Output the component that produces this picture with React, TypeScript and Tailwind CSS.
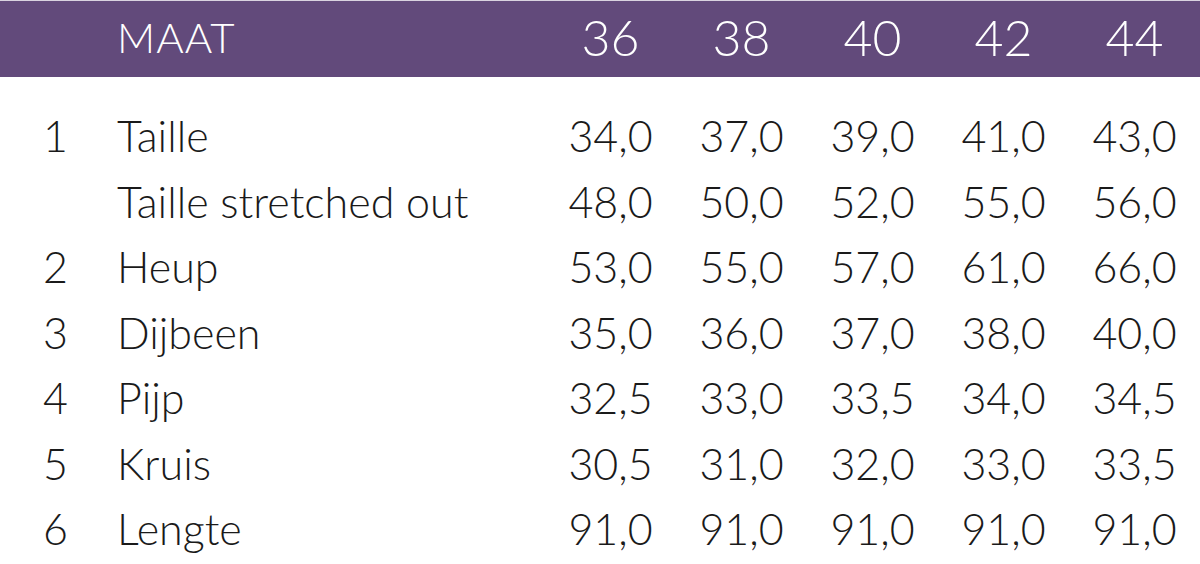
import React from "react";

const sizes = ["36", "38", "40", "42", "44"];
const rows: [string, string, string[]][] = [
  ["1", "Taille", ["34,0", "37,0", "39,0", "41,0", "43,0"]],
  ["", "Taille stretched out", ["48,0", "50,0", "52,0", "55,0", "56,0"]],
  ["2", "Heup", ["53,0", "55,0", "57,0", "61,0", "66,0"]],
  ["3", "Dijbeen", ["35,0", "36,0", "37,0", "38,0", "40,0"]],
  ["4", "Pijp", ["32,5", "33,0", "33,5", "34,0", "34,5"]],
  ["5", "Kruis", ["30,5", "31,0", "32,0", "33,0", "33,5"]],
  ["6", "Lengte", ["91,0", "91,0", "91,0", "91,0", "91,0"]],
];

export default function App() {
  return (
    <div
      className="w-[1200px] h-[564px] bg-white overflow-hidden"
      style={{ fontFamily: "Lato, 'Noto Sans', sans-serif" }}
    >
      <div className="h-px bg-[#d9d3e0]" />
      <div className="grid grid-cols-[117px_1fr_repeat(5,131px)] items-center h-[76px] pb-[5px] bg-[#624a7b] text-white font-light">
        <div />
        <div className="text-[42px] leading-none tracking-[1px]">MAAT</div>
        {sizes.map((s) => (
          <div key={s} className="text-center text-[50px] leading-none">
            {s}
          </div>
        ))}
      </div>
      <div className="pt-[26px] text-[#1a1a1a] font-light">
        {rows.map(([n, label, vals], i) => (
          <div
            key={i}
            className="grid grid-cols-[117px_1fr_repeat(5,131px)] items-center h-[65.5px] text-[43px] leading-none"
          >
            <div className="pl-[43px]">{n}</div>
            <div>{label}</div>
            {vals.map((v, j) => (
              <div key={j} className="text-center">
                {v}
              </div>
            ))}
          </div>
        ))}
      </div>
    </div>
  );
}
